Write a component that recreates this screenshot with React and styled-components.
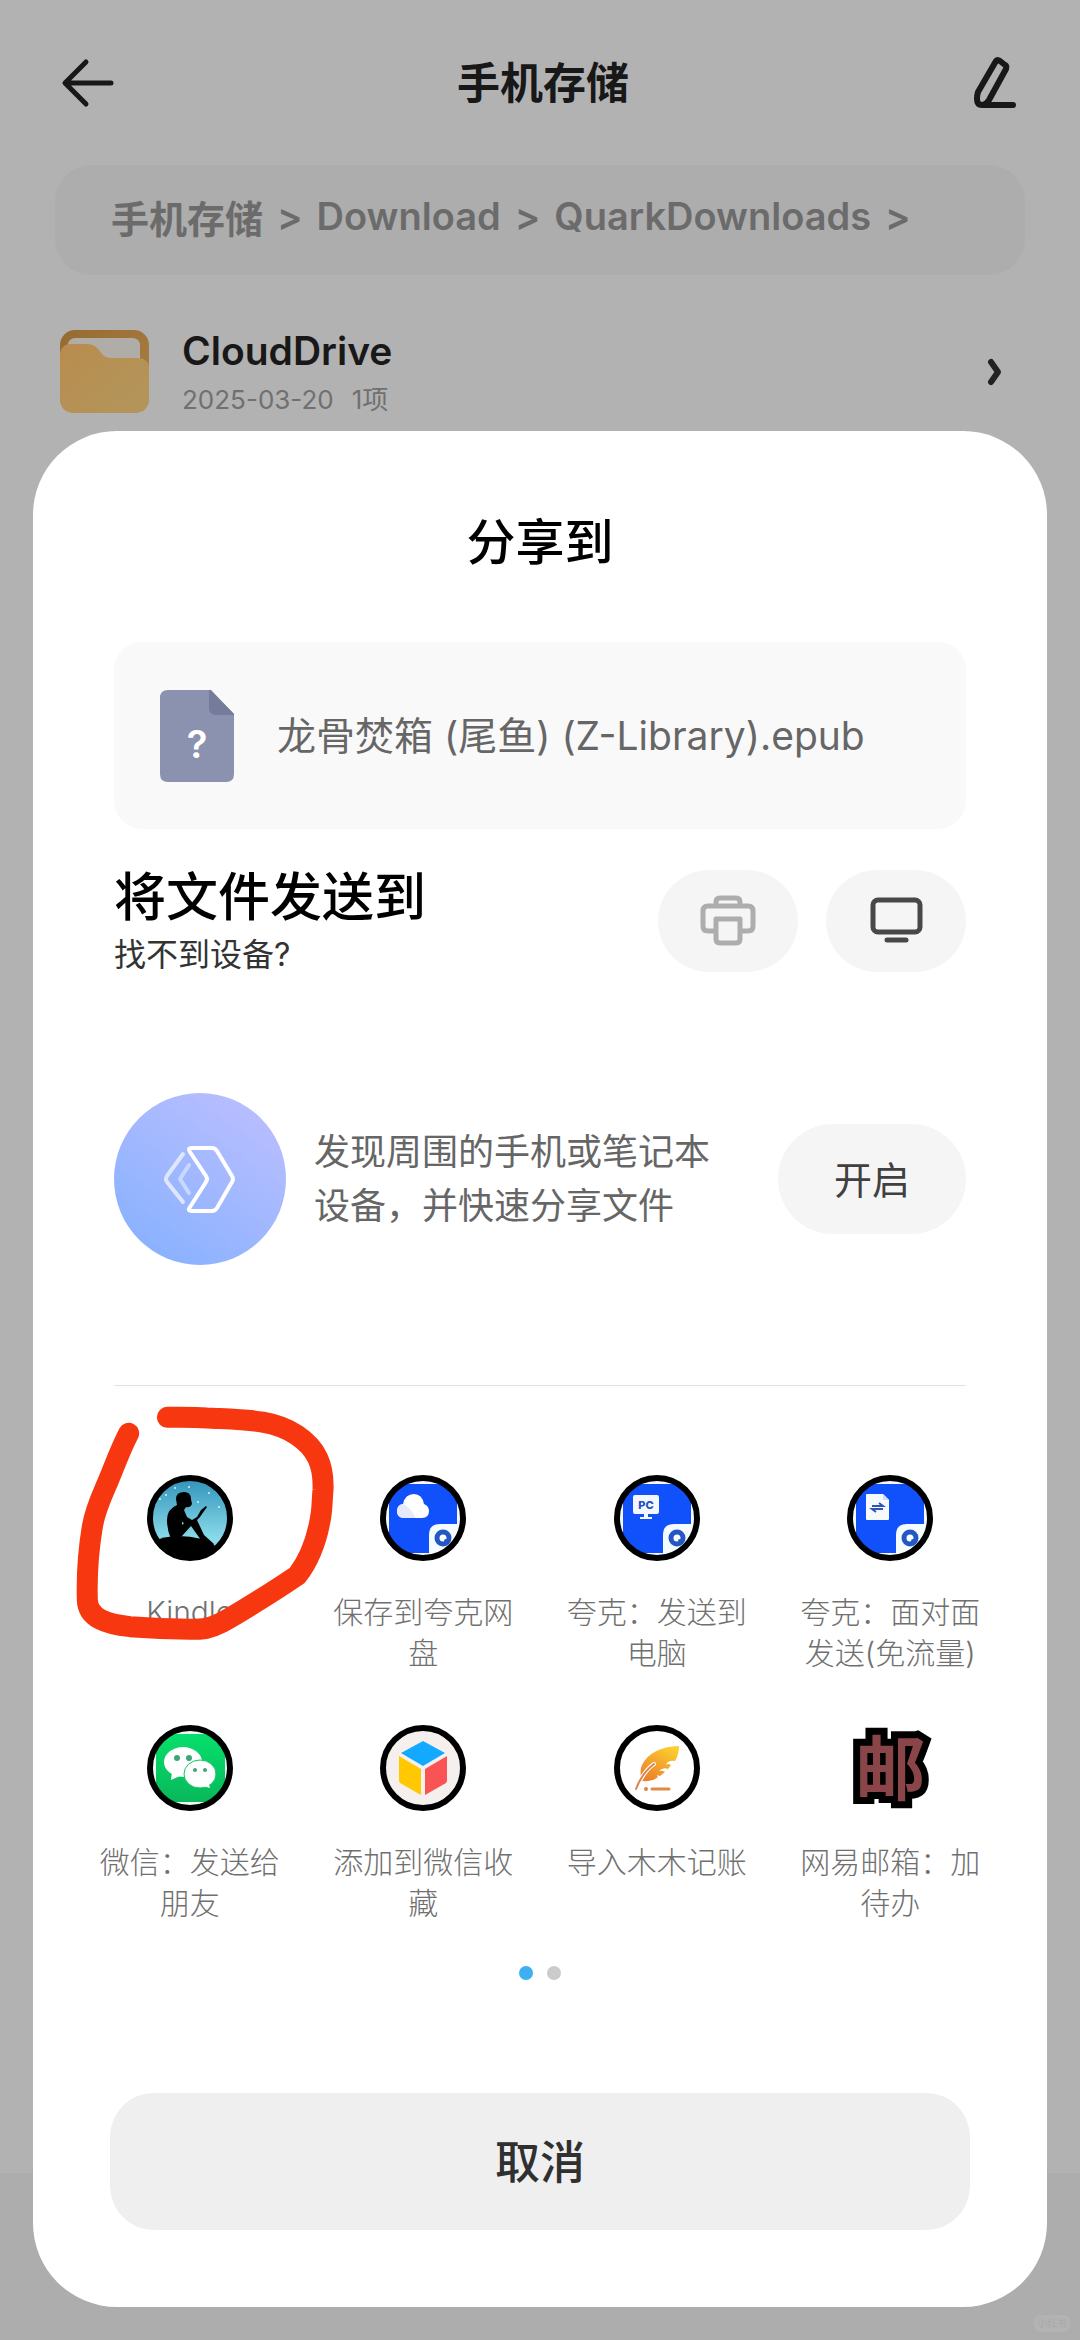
import React from "react"
import styled, { createGlobalStyle, css } from "styled-components"

const GlobalStyle = createGlobalStyle`
  * {
    box-sizing: border-box;
  }
  body {
    margin: 0;
    background: #b2b2b2;
    font-family: Inter, "Noto Sans CJK SC", sans-serif;
    color: #000;
  }
  h1, h2, h3, p, ul {
    margin: 0;
    padding: 0;
  }
  button {
    border: 0;
    padding: 0;
    background: none;
    font: inherit;
    color: inherit;
    cursor: pointer;
  }
  a {
    color: inherit;
    text-decoration: none;
  }
  svg {
    display: block;
    flex: none;
  }
`

const BackIcon = () => (
  <svg width="56" height="60" viewBox="0 0 56 60" fill="none" stroke="#181818" strokeWidth="5" strokeLinecap="round" strokeLinejoin="round">
    <path d="M26 9 5 30l21 21M6 30h45" />
  </svg>
)

const EditIcon = () => (
  <svg width="50" height="60" viewBox="0 0 50 60" fill="none" stroke="#181818" strokeWidth="6" strokeLinecap="round" strokeLinejoin="round">
    <path d="M26 8 8 39Q7 42 7 46 7 52 12 52 16 52 19 47L36 16Q37 13 35 12L30 8Q27 6 26 8ZM12 52H43" />
  </svg>
)

const FolderIcon = () => (
  <svg width="90" height="88" viewBox="0 0 90 88">
    <defs>
      <linearGradient id="folderBack" x1="0" y1="0" x2="1" y2="1">
        <stop offset="0" stopColor="#966b30" />
        <stop offset="1" stopColor="#ab8148" />
      </linearGradient>
      <linearGradient id="folderFront" x1="0" y1="0" x2="1" y2="1">
        <stop offset="0" stopColor="#b98c4e" />
        <stop offset="1" stopColor="#b2965c" />
      </linearGradient>
    </defs>
    <rect width="89" height="83" rx="15" fill="url(#folderBack)" />
    <path d="M8 13Q10 8 16 8H72Q80 8 80 16V35H8Z" fill="#b0ada8" />
    <path d="M0 23Q2 14 11 14H27Q34 14 38 19L43 25Q46 28 51 28H78Q87 28 89 36V68Q89 83 74 83H15Q0 83 0 68Z" fill="url(#folderFront)" />
  </svg>
)

const ChevronIcon = () => (
  <svg width="18" height="34" viewBox="0 0 18 34" fill="none" stroke="#222" strokeWidth="6" strokeLinecap="round" strokeLinejoin="round">
    <path d="M5 5 12 15 5 25" />
  </svg>
)

const UnknownFileIcon = () => (
  <svg width="74" height="92" viewBox="0 0 74 92">
    <path d="M8 0H50L74 24V84Q74 92 66 92H8Q0 92 0 84V8Q0 0 8 0Z" fill="#8b92b0" />
    <path d="M49 0H51L74 24V25H56Q49 25 49 18Z" fill="#757c9b" />
    <text x="37" y="68" fill="#fff" fontSize="38" fontWeight="600" textAnchor="middle">?</text>
  </svg>
)

const PrinterIcon = () => (
  <svg width="58" height="52" viewBox="0 0 58 52" fill="none" stroke="#adadad" strokeWidth="5" strokeLinejoin="round">
    <path d="M17 11V7Q17 3 21 3H37Q41 3 41 7V11M17 36H9Q4 36 4 31V16Q4 11 9 11H49Q54 11 54 16V31Q54 36 49 36H41" />
    <path d="M17 24H41V44Q41 48 37 48H21Q17 48 17 44Z" />
  </svg>
)

const MonitorIcon = () => (
  <svg width="54" height="48" viewBox="0 0 54 48" fill="none" stroke="#484848" strokeWidth="5">
    <rect x="4" y="3" width="47" height="32" rx="5" />
    <path d="M18 43H37" strokeLinecap="round" />
  </svg>
)

const NearbyIcon = () => (
  <svg width="172" height="172" viewBox="0 0 172 172" fill="none" strokeLinecap="round" strokeLinejoin="round">
    <defs>
      <linearGradient id="nearby" x1="0.2" y1="0.9" x2="0.75" y2="0.1">
        <stop offset="0" stopColor="#8bb2ff" />
        <stop offset="1" stopColor="#b6bdff" />
      </linearGradient>
    </defs>
    <circle cx="86" cy="86" r="86" fill="url(#nearby)" />
    <path d="M75 72 66 86 75 100" stroke="#c9d8ff" strokeWidth="4" />
    <path d="M69 61 53 83Q51 86 53 89L69 109" stroke="#dfe7ff" strokeWidth="4" />
    <path d="M78 55H98Q101 55 103 58L118 83Q120 86 118 89L103 115Q101 118 98 118H78Q73 118 76 114L92 89Q94 86 92 83L76 59Q73 55 78 55Z" stroke="#fff" strokeWidth="4" />
  </svg>
)

// every app icon shares the same thick black ring
const Ring = ({ id, background, children }) => (
  <svg width="86" height="86" viewBox="0 0 86 86">
    <clipPath id={id}>
      <circle cx="43" cy="43" r="38" />
    </clipPath>
    <g clipPath={`url(#${id})`}>
      <rect width="86" height="86" fill={background} />
      {children}
    </g>
    <circle cx="43" cy="43" r="40" fill="none" stroke="#000" strokeWidth="6" />
  </svg>
)

const KindleLogo = () => (
  <Ring id="kindle" background="url(#kindleSky)">
    <defs>
      <linearGradient id="kindleSky" x1="0" y1="0" x2="0" y2="1">
        <stop offset="0" stopColor="#2c8fb8" />
        <stop offset="0.75" stopColor="#8bdcea" />
      </linearGradient>
    </defs>
    <g fill="#d8f4fb">
      <circle cx="28" cy="13" r="1" />
      <circle cx="19" cy="20" r="1" />
      <circle cx="13" cy="24" r="1" />
      <circle cx="42" cy="12" r="1" />
      <circle cx="51" cy="27" r="1" />
      <circle cx="62" cy="18" r="1" />
      <circle cx="72" cy="32" r="1" />
    </g>
    <path d="M5 67Q16 61 32 61 55 61 68 71L80 86H0Z" />
    <path d="M29 24Q29 17 37 17 44 17 44 24L45 29Q43 33 39 32L37 35 40 42 45 45 50 42 54 35 59 31 60 32 55 39 53 42 50 45 57 60 67 69 66 71 56 68 44 51 35 61 24 64Q20 55 20 45 20 34 30 30Z" />
    <path d="M35 47 37 48 35 50Z" fill="#8bdcea" />
  </Ring>
)

const QuarkBase = ({ id, children }) => (
  <Ring id={id} background="#f4f8ff">
    <rect x="9" y="9" width="68" height="69" fill="#1151fb" />
    {children}
    <path d="M49 80V60Q49 49 60 49H80V80Z" fill="#f6fbff" />
    <circle cx="63" cy="63" r="6" fill="#fff" stroke="#2257c4" strokeWidth="5" />
    <circle cx="66" cy="66" r="2" fill="#2257c4" />
  </Ring>
)

const QuarkCloudLogo = () => (
  <QuarkBase id="quarkCloud">
    <path d="M24 43Q17 43 17 36 17 30 23 29 25 19 34 19 42 19 44 29 49 31 49 36 49 43 42 43Z" fill="#fff" />
    <path d="M24 43Q17 43 17 36 17 30 23 29 29 31 36 43Z" fill="#e6e9fa" />
  </QuarkBase>
)

const QuarkPcLogo = () => (
  <QuarkBase id="quarkPc">
    <path d="M21 20H43Q45 20 45 22V37Q45 39 43 39H34V42H38V44H26V42H30V39H21Q19 39 19 37V22Q19 20 21 20Z" fill="#f3f7ff" />
    <text x="32" y="34" fill="#2450c0" fontSize="11" fontWeight="800" textAnchor="middle">PC</text>
  </QuarkBase>
)

const QuarkFileLogo = () => (
  <QuarkBase id="quarkFile">
    <path d="M20 19H36L42 25V44Q42 45 41 45H20Q19 45 19 44V20Q19 19 20 19Z" fill="#f6faff" />
    <path d="M36 19V25H42Z" fill="#cddcff" />
    <path d="M25 31H36L32 28M36 34H25L29 37" fill="none" stroke="#2d55b8" strokeWidth="2" />
  </QuarkBase>
)

const WechatLogo = () => (
  <Ring id="wechat" background="#e9fff2">
    <defs>
      <linearGradient id="wechatGreen" x1="0" y1="0" x2="0" y2="1">
        <stop offset="0" stopColor="#07df6c" />
        <stop offset="1" stopColor="#08b85a" />
      </linearGradient>
    </defs>
    <rect x="9" y="9" width="69" height="68" fill="url(#wechatGreen)" />
    <ellipse cx="36" cy="37" rx="19" ry="15" fill="#fff" />
    <path d="M25 47 24 55 33 51Z" fill="#fff" />
    <ellipse cx="53" cy="49" rx="16" ry="14" fill="#fff" stroke="#0fc866" strokeWidth="1" />
    <path d="M56 61 63 63 61 57Z" fill="#fff" />
    <g fill="#3fa774">
      <circle cx="30" cy="33" r="3" />
      <circle cx="42" cy="33" r="3" />
      <circle cx="48" cy="45" r="2" />
      <circle cx="58" cy="45" r="2" />
    </g>
  </Ring>
)

const CubeLogo = () => (
  <Ring id="cube" background="#f5f0ed">
    <path d="M43 16 65 28 43 41 21 28Z" fill="#12a9ff" />
    <path d="M19 31 41 44V70L20 58 19 56Z" fill="#ffc800" />
    <path d="M67 31 45 44V70L66 58 67 56Z" fill="#fa5353" />
  </Ring>
)

const FeatherLogo = () => (
  <Ring id="feather" background="#fff">
    <defs>
      <linearGradient id="featherGold" x1="0.8" y1="0" x2="0.2" y2="1">
        <stop offset="0" stopColor="#fcd02f" />
        <stop offset="1" stopColor="#ec7f2a" />
      </linearGradient>
    </defs>
    <path d="M65 21Q37 22 28 40 25 46 28 56 38 57 44 52 41 49 46 51L51 47Q48 45 45 46 49 42 54 44L57 40Q54 38 52 40 54 35 61 36 65 30 65 21Z" fill="url(#featherGold)" />
    <path d="M40 39Q32 44 26 56" fill="none" stroke="#fff" strokeWidth="4" strokeLinecap="round" />
    <path d="M40 39Q28 48 22 64" fill="none" stroke="#d98448" strokeWidth="2" strokeLinecap="round" />
    <circle cx="32" cy="64" r="2" fill="#d98448" />
    <path d="M38 64H55" stroke="#e08a44" strokeWidth="3" strokeLinecap="round" />
  </Ring>
)

const MailLogo = () => <MailGlyph>邮</MailGlyph>

const HandCircle = () => (
  <Scribble viewBox="0 0 900 810" aria-hidden="true">
    <path d="M322 82C360 82 400 81 440 84C560 90 640 88 710 135C770 175 792 225 789 300C786 330 787 350 783 375C770 460 740 520 712 556C640 605 520 680 480 700C450 716 430 718 390 718C330 717 280 715 210 710C140 703 84 685 82 630C80 560 82 500 97 410C107 350 130 310 150 260C170 210 185 170 206 130" />
  </Scribble>
)

const apps = [
  { name: "Kindle", Logo: KindleLogo, marked: true },
  { name: "保存到夸克网盘", Logo: QuarkCloudLogo },
  { name: "夸克：发送到电脑", Logo: QuarkPcLogo },
  { name: "夸克：面对面发送(免流量)", Logo: QuarkFileLogo },
  { name: "微信：发送给朋友", Logo: WechatLogo },
  { name: "添加到微信收藏", Logo: CubeLogo },
  { name: "导入木木记账", Logo: FeatherLogo },
  { name: "网易邮箱：加待办", Logo: MailLogo },
]

const crumbs = ["手机存储", "Download", "QuarkDownloads"]

const App = () => {
  return (
    <Screen lang="zh-CN">
      <GlobalStyle />
      <Header>
        <button type="button" aria-label="返回">
          <BackIcon />
        </button>
        <h1>手机存储</h1>
        <button type="button" aria-label="编辑">
          <EditIcon />
        </button>
      </Header>
      <Breadcrumb>
        {crumbs.map((crumb) => (
          <React.Fragment key={crumb}>
            <a href="#">{crumb}</a>
            <span>&gt;</span>
          </React.Fragment>
        ))}
      </Breadcrumb>
      <FolderRow href="#">
        <FolderIcon />
        <div>
          <FolderName>CloudDrive</FolderName>
          <FolderMeta>
            <span>2025-03-20</span>
            <span>1项</span>
          </FolderMeta>
        </div>
        <ChevronIcon />
      </FolderRow>

      <Sheet role="dialog" aria-labelledby="share-title">
        <SheetTitle id="share-title">分享到</SheetTitle>
        <FileCard>
          <UnknownFileIcon />
          <p>龙骨焚箱 (尾鱼) (Z-Library).epub</p>
        </FileCard>
        <SendRow>
          <div>
            <h3>将文件发送到</h3>
            <a href="#">找不到设备?</a>
          </div>
          <PillButton type="button" aria-label="打印机">
            <PrinterIcon />
          </PillButton>
          <PillButton type="button" aria-label="电脑">
            <MonitorIcon />
          </PillButton>
        </SendRow>
        <Nearby>
          <NearbyIcon />
          <p>
            发现周围的手机或笔记本
            <br />
            设备，并快速分享文件
          </p>
          <PillButton type="button" $large>
            开启
          </PillButton>
        </Nearby>
        <AppGrid>
          {apps.map(({ name, Logo, marked }) => (
            <li key={name}>
              <AppButton type="button">
                <Logo />
                <AppName>{name}</AppName>
              </AppButton>
              {marked && <HandCircle />}
            </li>
          ))}
        </AppGrid>
        <Pager>
          <Dot $active />
          <Dot />
        </Pager>
        <CancelButton type="button">取消</CancelButton>
      </Sheet>
      <Watermark>小红书</Watermark>
    </Screen>
  )
}

const Screen = styled.div`
  position: relative;
  display: flex;
  flex-direction: column;
  min-height: 100vh;
  background: linear-gradient(to top, #adadad 167px, #b2b2b2 167px);
`

const Header = styled.header`
  display: flex;
  align-items: center;
  justify-content: space-between;
  height: 165px;
  padding: 0 60px;
  h1 {
    color: #181818;
    font-size: 43px;
    font-weight: 600;
    line-height: 60px;
  }
`

const Breadcrumb = styled.nav`
  display: flex;
  align-items: center;
  gap: 14px;
  height: 110px;
  margin: 0 55px;
  padding: 0 56px 8px;
  border-radius: 36px;
  background: #adadad;
  color: #6b6b6b;
  font-size: 38px;
  font-weight: 600;
  white-space: nowrap;
`

const FolderRow = styled.a`
  display: flex;
  align-items: center;
  gap: 32px;
  padding: 50px 76px 8px 60px;
  div {
    flex: 1;
  }
`

const FolderName = styled.p`
  color: #181818;
  font-size: 39px;
  font-weight: 600;
  line-height: 52px;
`

const FolderMeta = styled.p`
  display: flex;
  gap: 18px;
  color: #707070;
  font-size: 26px;
  line-height: 46px;
`

const Sheet = styled.section`
  display: flex;
  flex-direction: column;
  margin: 0 33px 33px;
  padding: 77px 0;
  border-radius: 84px;
  background: #fff;
`

const SheetTitle = styled.h2`
  font-size: 49px;
  font-weight: 500;
  line-height: 70px;
  text-align: center;
`

const FileCard = styled.div`
  display: flex;
  align-items: center;
  gap: 43px;
  height: 187px;
  margin: 64px 81px 0;
  padding: 0 46px;
  border-radius: 28px;
  background: #f9f9f9;
  p {
    padding-bottom: 6px;
    color: #666;
    font-size: 39px;
    white-space: nowrap;
  }
`

const SendRow = styled.div`
  display: flex;
  align-items: center;
  gap: 28px;
  margin: 35px 81px 0;
  div {
    flex: 1;
  }
  h3 {
    font-size: 52px;
    font-weight: 500;
    line-height: 68px;
  }
  a {
    display: block;
    color: #333;
    font-size: 32px;
    line-height: 46px;
  }
`

const PillButton = styled.button`
  display: flex;
  align-items: center;
  justify-content: center;
  flex: none;
  width: 140px;
  height: 102px;
  border-radius: 55px;
  background: #f5f5f5;
  ${({ $large }) =>
    $large &&
    css`
      width: 188px;
      height: 110px;
      padding-bottom: 4px;
      color: #404040;
      font-size: 38px;
    `}
`

const Nearby = styled.div`
  display: flex;
  align-items: center;
  gap: 28px;
  margin: 115px 81px 0;
  padding-bottom: 120px;
  border-bottom: 1px solid #e2e2e2;
  p {
    flex: 1;
    color: #666;
    font-size: 36px;
    line-height: 54px;
    white-space: nowrap;
  }
`

const AppGrid = styled.ul`
  display: grid;
  grid-template-columns: repeat(4, 1fr);
  row-gap: 51px;
  margin: 89px 40px 0;
  list-style: none;
  li {
    position: relative;
    display: flex;
    justify-content: center;
  }
`

const AppButton = styled.button`
  display: flex;
  flex-direction: column;
  align-items: center;
  gap: 31px;
  width: 190px;
`

const AppName = styled.span`
  min-height: 82px;
  color: #707070;
  font-size: 30px;
  font-weight: 300;
  line-height: 41px;
`

const MailGlyph = styled.span`
  height: 86px;
  color: #8a4549;
  font-family: "Noto Sans CJK SC", sans-serif;
  font-size: 70px;
  font-weight: 700;
  line-height: 80px;
  -webkit-text-stroke: 14px #000;
  stroke-linejoin: round;
  paint-order: stroke fill;
`

const Scribble = styled.svg`
  position: absolute;
  top: -85px;
  left: -13px;
  width: 300px;
  height: 270px;
  fill: none;
  stroke: #f73710;
  stroke-width: 63;
  stroke-linecap: round;
  stroke-linejoin: round;
  pointer-events: none;
`

const Pager = styled.div`
  display: flex;
  justify-content: center;
  gap: 14px;
  margin-top: 42px;
`

const Dot = styled.span`
  width: 14px;
  height: 14px;
  border-radius: 50%;
  background: ${({ $active }) => ($active ? "#3eb0f2" : "#cbcbcb")};
`

const CancelButton = styled.button`
  height: 137px;
  margin: 113px 77px 0;
  padding-bottom: 4px;
  border-radius: 44px;
  background: #efefef;
  color: #303030;
  font-size: 45px;
  font-weight: 500;
`

const Watermark = styled.span`
  position: absolute;
  right: 10px;
  bottom: 8px;
  padding: 0 3px;
  border-radius: 6px;
  background: #b3b3b3;
  color: #a9a9a9;
  font-size: 10px;
  line-height: 17px;
`

export default App
